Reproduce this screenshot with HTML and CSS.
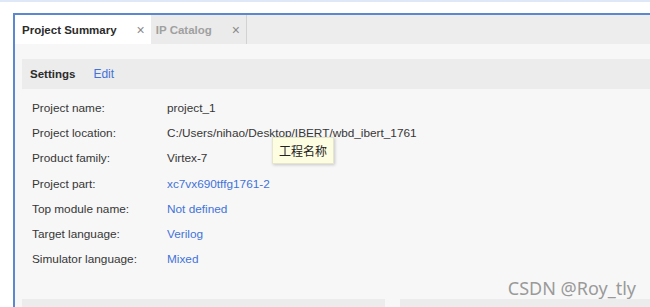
FILE: index.html
```html
<!DOCTYPE html>
<html>
<head>
<meta charset="utf-8">
<link rel="stylesheet" href="styles.css">
</head>
<body>
<div class="topline"></div>
<div class="frame">
  <div class="tabbar">
    <div class="tab active"><span class="tab-label">Project Summary</span><span class="close">×</span></div>
    <div class="tab"><span class="tab-label">IP Catalog</span><span class="close">×</span></div>
  </div>
  <div class="content">
    <div class="section-head"><span class="section-title">Settings</span><span class="link">Edit</span></div>
    <div class="rows">
      <div class="row"><span class="label">Project name:</span><span class="value">project_1</span></div>
      <div class="row"><span class="label">Project location:</span><span class="value">C:/Users/nihao/Desktop/IBERT/wbd_ibert_1761</span></div>
      <div class="row"><span class="label">Product family:</span><span class="value">Virtex-7</span></div>
      <div class="row"><span class="label">Project part:</span><span class="value link">xc7vx690tffg1761-2</span></div>
      <div class="row"><span class="label">Top module name:</span><span class="value link">Not defined</span></div>
      <div class="row"><span class="label">Target language:</span><span class="value link">Verilog</span></div>
      <div class="row"><span class="label">Simulator language:</span><span class="value link">Mixed</span></div>
    </div>
    <div class="bottom">
      <div class="panel"></div>
      <div class="panel"></div>
    </div>
    <div class="tooltip">工程名称</div>
    <div class="watermark">CSDN @Roy_tly</div>
  </div>
</div>
</body>
</html>
```
FILE: styles.css
```css
html, body {
  margin: 0;
  padding: 0;
  background: #ffffff;
  width: 650px;
  height: 307px;
  overflow: hidden;
  font-family: "Liberation Sans", Arial, sans-serif;
}
.topline {
  height: 2px;
  background: #dfe8f6;
  margin-bottom: 11px;
}
.frame {
  margin-left: 13px;
  border-left: 2px solid #5b88cf;
  border-top: 2px solid #5b88cf;
  height: 292px;
  display: flex;
  flex-direction: column;
}
.tabbar {
  display: flex;
  height: 29px;
  background: #ededed;
}
.tab {
  display: flex;
  align-items: center;
  padding: 0 6px 0 5px;
  font-size: 11.5px;
  font-weight: bold;
  color: #a0a0a0;
  background: #ebebeb;
  border-right: 1px solid #d2d2d2;
}
.tab.active {
  padding-left: 7px;
  background: #ffffff;
  color: #2b2b2b;
  border-right: none;
}
.close {
  font-weight: normal;
  font-size: 14px;
  color: #8a8a8a;
}
.tab.active .close { margin-left: 20px; }
.tab:not(.active) .close { margin-left: 20px; }
.content {
  position: relative;
  flex: 1;
  background: #f7f7f7;
  padding: 15px 0 0 7px;
  display: flex;
  flex-direction: column;
}
.section-head {
  height: 30px;
  background: #ececec;
  display: flex;
  align-items: center;
  padding-left: 8px;
  font-size: 12px;
}
.section-title {
  font-weight: bold;
  font-size: 11.5px;
  color: #2b2b2b;
  margin-right: 18px;
}
.link { color: #4273d8; }
.rows {
  padding: 6px 0 0 10px;
  display: flex;
  flex-direction: column;
}
.row {
  display: flex;
  height: 25.3px;
  align-items: center;
  font-size: 11.8px;
  color: #363636;
}
.label { width: 135px; }
.bottom {
  margin-top: auto;
  display: flex;
  gap: 15px;
  height: 8px;
}
.panel {
  background: #ececec;
  flex: 1;
}
.panel:first-child { flex: 0 0 363px; }
.tooltip {
  position: absolute;
  left: 257px;
  top: 93px;
  padding: 5px 6px;
  background: #fdfde1;
  border: 1px solid #e6e6cf;
  box-shadow: 1px 1px 3px rgba(0,0,0,0.2);
  font-family: "Noto Sans CJK SC", sans-serif;
  font-size: 12px;
  color: #222;
  line-height: 15px;
}
.watermark {
  position: absolute;
  right: 14px;
  bottom: 8px;
  font-family: "Noto Sans", "Open Sans", sans-serif;
  font-size: 18px;
  color: #9a9a9a;
  line-height: 22px;
}
```
